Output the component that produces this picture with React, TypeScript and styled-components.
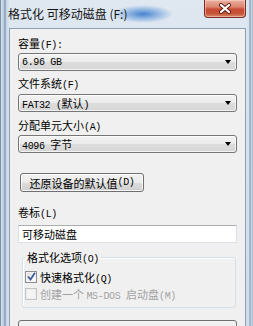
import styled, { createGlobalStyle } from "styled-components";

const GlobalStyle = createGlobalStyle`
    body {
        margin: 0;
        background: #ffffff;
    }
`;

const CJK = `"Noto Sans CJK SC", "Noto Sans", sans-serif`;

const Window = styled.div`
    width: 253px;
    height: 326px;
    overflow: hidden;
    display: flex;
    flex-direction: column;
    box-sizing: border-box;
    border-left: 1px solid #7d90a8;
    background:
        linear-gradient(to right, #d3dfeb 0, #b7c9dc 3px, #6f86a3 4px, #c6d5e5 5px, #d8e3ee 8px, transparent 8px),
        linear-gradient(to left, #a9bcd0 0, #c9d7e6 2px, #7e93ad 3px, #d3dfeb 4px, transparent 7px),
        linear-gradient(#dfe8f1, #cddbe9);
    font-family: ${CJK};
`;

const TitleBar = styled.div`
    height: 28px;
    flex-shrink: 0;
    display: flex;
    justify-content: space-between;
    align-items: flex-start;
    background: radial-gradient(ellipse 30px 9px at 142px 14px, rgba(55, 120, 205, 0.9) 0, rgba(70, 135, 210, 0.45) 55%, rgba(70, 135, 210, 0) 100%);
`;

const Title = styled.div`
    padding: 6px 0 0 7px;
    font-size: 12px;
    line-height: 16px;
    color: #141414;
    white-space: nowrap;
`;

const CloseButton = styled.div`
    width: 42px;
    height: 18px;
    margin-right: 7px;
    box-sizing: border-box;
    border: 1px solid #7a2d22;
    border-top: none;
    border-radius: 0 0 4px 4px;
    background: linear-gradient(#eab0a2 0, #dc8670 40%, #c94a32 55%, #c65539 80%, #d98b6d 100%);
    box-shadow: inset 0 0 0 1px rgba(255, 220, 210, 0.5);
    display: flex;
    align-items: center;
    justify-content: center;
`;

const Client = styled.div`
    flex: 1;
    margin: 0 7px 0 8px;
    padding: 7px 8px 0 8px;
    border: 1px solid #8e9fb4;
    border-bottom: none;
    background: #f0f0f0;
    display: flex;
    flex-direction: column;
    align-items: stretch;
    font-size: 11px;
    color: #000000;
`;

const Ascii = styled.span`
    font-family: "Liberation Mono", "DejaVu Sans Mono", monospace;
    font-size: 10px;
    letter-spacing: -0.35px;
`;

const Label = styled.div<{ $mt?: number }>`
    margin-top: ${p => p.$mt ?? 0}px;
    height: 14px;
    line-height: 14px;
    white-space: nowrap;
`;

const Combo = styled.div<{ $mt: number }>`
    margin-top: ${p => p.$mt}px;
    height: 18px;
    box-sizing: border-box;
    border: 1px solid #767676;
    border-radius: 3px;
    background: linear-gradient(#f3f3f3 0, #ebebeb 50%, #dddddd 51%, #d6d6d6 100%);
    box-shadow: inset 0 0 0 1px rgba(255, 255, 255, 0.7);
    display: flex;
    align-items: center;
    justify-content: space-between;
    padding: 0 5px 0 3px;
    white-space: nowrap;
`;

const Arrow = styled.span`
    width: 0;
    height: 0;
    border-left: 3.5px solid transparent;
    border-right: 3.5px solid transparent;
    border-top: 4px solid #000000;
`;

const Button = styled.div<{ $mt: number }>`
    margin-top: ${p => p.$mt}px;
    margin-left: 2px;
    width: 124px;
    height: 19px;
    box-sizing: border-box;
    border: 1px solid #707070;
    border-radius: 3px;
    background: linear-gradient(#f2f2f2 0, #ebebeb 50%, #dddddd 51%, #cfcfcf 100%);
    box-shadow: inset 0 0 0 1px rgba(255, 255, 255, 0.8);
    display: flex;
    align-items: center;
    justify-content: center;
    white-space: nowrap;
`;

const TextInput = styled.div<{ $mt: number }>`
    margin-top: ${p => p.$mt}px;
    height: 18px;
    box-sizing: border-box;
    border: 1px solid #dbdfe6;
    border-top-color: #abadb3;
    background: #ffffff;
    padding: 0 3px;
    display: flex;
    align-items: center;
`;

const Group = styled.fieldset<{ $mt: number }>`
    margin: ${p => p.$mt}px 1px 0 4px;
    padding: 4px 4px 5px 2px;
    border: 1px solid #d5dfe5;
    border-radius: 3px;
    min-width: 0;
    box-shadow: 1px 1px 0 #ffffff inset;
`;

const Legend = styled.legend`
    padding: 0 2px;
    height: 14px;
    line-height: 14px;
    white-space: nowrap;
`;

const CheckRow = styled.div<{ $disabled?: boolean }>`
    height: 17px;
    display: flex;
    align-items: center;
    gap: 3px;
    color: ${p => (p.$disabled ? "#a3a3a3" : "#000000")};
    white-space: nowrap;
`;

const Box = styled.span<{ $disabled?: boolean }>`
    width: 12px;
    height: 12px;
    box-sizing: border-box;
    border: 1px solid ${p => (p.$disabled ? "#c5c5c5" : "#8e8f8f")};
    background: ${p =>
        p.$disabled
            ? "#f4f4f4"
            : "linear-gradient(135deg, #d8d8d8 0, #f4f4f4 60%, #ffffff 100%)"};
    box-shadow: inset 0 0 0 1px ${p => (p.$disabled ? "#ececec" : "#f4f4f4")};
    display: flex;
    align-items: center;
    justify-content: center;
    flex-shrink: 0;
`;

const BottomButton = styled.div<{ $mt: number }>`
    margin-top: ${p => p.$mt}px;
    height: 24px;
    box-sizing: border-box;
    border: 1px solid #707070;
    border-radius: 3px;
    background: linear-gradient(#f2f2f2, #ebebeb);
`;

export default function App() {
    return (
        <>
            <GlobalStyle />
            <Window>
                <TitleBar>
                    <Title>格式化 可移动磁盘 (F:)</Title>
                    <CloseButton>
                        <svg width="14" height="11" viewBox="0 0 14 11">
                            <path d="M3 2 L11 9 M11 2 L3 9" stroke="#5a1d14" strokeWidth="4" strokeLinecap="round" />
                            <path d="M3 2 L11 9 M11 2 L3 9" stroke="#ffffff" strokeWidth="2.2" strokeLinecap="round" />
                        </svg>
                    </CloseButton>
                </TitleBar>
                <Client>
                    <Label>容量<Ascii>(F):</Ascii></Label>
                    <Combo $mt={3}>
                        <Ascii>6.96 GB</Ascii>
                        <Arrow />
                    </Combo>
                    <Label $mt={5}>文件系统<Ascii>(F)</Ascii></Label>
                    <Combo $mt={4}>
                        <span><Ascii>FAT32 (</Ascii>默认<Ascii>)</Ascii></span>
                        <Arrow />
                    </Combo>
                    <Label $mt={6}>分配单元大小<Ascii>(A)</Ascii></Label>
                    <Combo $mt={3}>
                        <span><Ascii>4096 </Ascii>字节</span>
                        <Arrow />
                    </Combo>
                    <Button $mt={20}>还原设备的默认值<Ascii>(D)</Ascii></Button>
                    <Label $mt={13}>卷标<Ascii>(L)</Ascii></Label>
                    <TextInput $mt={6}>可移动磁盘</TextInput>
                    <Group $mt={7}>
                        <Legend>格式化选项<Ascii>(O)</Ascii></Legend>
                        <CheckRow>
                            <Box>
                                <svg width="9" height="9" viewBox="0 0 9 9">
                                    <path d="M1 4.5 L3.5 7.5 L8 0.8" fill="none" stroke="#3e5a9a" strokeWidth="1.8" />
                                </svg>
                            </Box>
                            <span>快速格式化<Ascii>(Q)</Ascii></span>
                        </CheckRow>
                        <CheckRow $disabled>
                            <Box $disabled />
                            <span>创建一个 <Ascii>MS-DOS </Ascii>启动盘<Ascii>(M)</Ascii></span>
                        </CheckRow>
                    </Group>
                    <BottomButton $mt={12} />
                </Client>
            </Window>
        </>
    );
}
